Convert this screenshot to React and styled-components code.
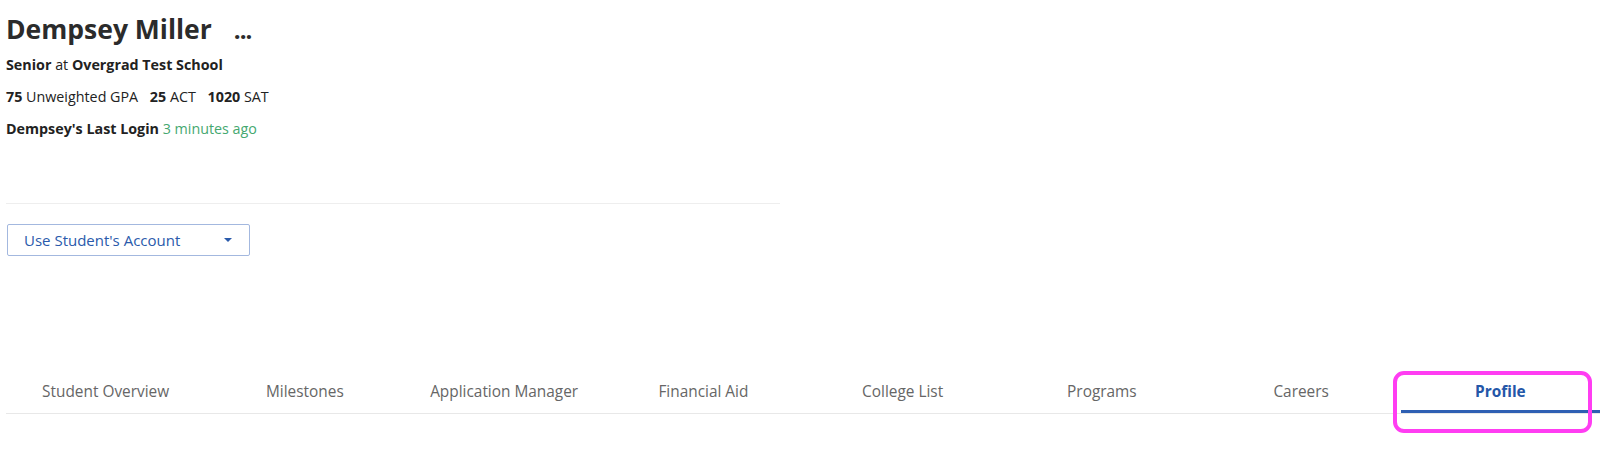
import React from 'react';
import styled, { createGlobalStyle } from 'styled-components';

const GlobalStyle = createGlobalStyle`
  html, body {
    margin: 0;
    padding: 0;
    background: #fff;
  }
  body {
    font-family: "Open Sans", "Noto Sans", sans-serif;
    color: #222;
  }
`;

const Page = styled.div`
  width: 1600px;
  height: 470px;
  padding: 11px 0 0 6px;
  box-sizing: border-box;
  overflow: hidden;
`;

const Header = styled.div`
  width: 774px;
`;

const NameRow = styled.h1`
  display: flex;
  align-items: baseline;
  margin: 0 0 1px;
  font-size: 26.5px;
  line-height: 36px;
  font-weight: 700;
  color: #2b2b2b;
`;

const MoreButton = styled.span`
  margin-left: 22px;
  font-size: 24px;
  letter-spacing: -1px;
  color: #2b2b2b;
  cursor: pointer;
`;

const InfoLine = styled.div`
  font-size: 14.3px;
  line-height: 32px;
  color: #222;
  white-space: nowrap;
`;

const Strong = styled.strong`
  font-weight: 700;
  margin-left: ${(p) => (p.$gap ? '8px' : '0')};
`;

const Recent = styled.span`
  color: #45a870;
`;

const Divider = styled.hr`
  margin: 58px 0 0;
  border: 0;
  border-top: 1px solid #eeeeee;
  width: 774px;
`;

const AccountButton = styled.button`
  display: flex;
  align-items: center;
  justify-content: space-between;
  box-sizing: border-box;
  width: 243px;
  height: 32px;
  margin: 20px 0 0 1px;
  padding: 0 17px 0 16px;
  background: #fff;
  border: 1px solid #a3b8df;
  border-radius: 2px;
  font-family: "Open Sans", sans-serif;
  font-size: 15px;
  color: #2a5aab;
  cursor: pointer;
`;

const Caret = styled.span`
  width: 0;
  height: 0;
  border-left: 4px solid transparent;
  border-right: 4px solid transparent;
  border-top: 4px solid #2a5aab;
`;

const TabBar = styled.nav`
  display: flex;
  margin-top: 117px;
  border-bottom: 1px solid #e8e8e8;
`;

const Tab = styled.div`
  position: relative;
  flex: 1 1 0;
  height: 40px;
  padding-top: 9px;
  box-sizing: border-box;
  text-align: center;
  font-size: 15.4px;
  line-height: 20px;
  white-space: nowrap;
  color: ${(p) => (p.$active ? '#2456a8' : '#666')};
  font-weight: ${(p) => (p.$active ? 700 : 400)};
  box-shadow: ${(p) => (p.$active ? 'inset 0 -3px 0 #2e5fb3' : 'none')};
  cursor: pointer;
`;

const Highlight = styled.span`
  position: absolute;
  left: -8px;
  right: 8px;
  top: -2px;
  bottom: -20px;
  border: 4px solid #ff3df2;
  border-radius: 11px;
  pointer-events: none;
`;

const tabs = [
  'Student Overview',
  'Milestones',
  'Application Manager',
  'Financial Aid',
  'College List',
  'Programs',
  'Careers',
  'Profile',
];

export default function App() {
  const active = 'Profile';
  return (
    <>
      <GlobalStyle />
      <Page>
        <Header>
          <NameRow>
            Dempsey Miller
            <MoreButton>...</MoreButton>
          </NameRow>
          <InfoLine>
            <Strong>Senior</Strong> at <Strong>Overgrad Test School</Strong>
          </InfoLine>
          <InfoLine>
            <Strong>75</Strong> Unweighted GPA <Strong $gap>25</Strong> ACT{' '}
            <Strong $gap>1020</Strong> SAT
          </InfoLine>
          <InfoLine>
            <Strong>Dempsey's Last Login</Strong> <Recent>3 minutes ago</Recent>
          </InfoLine>
          <Divider />
          <AccountButton type="button">
            <span>Use Student's Account</span>
            <Caret />
          </AccountButton>
        </Header>
        <TabBar>
          {tabs.map((t) => (
            <Tab key={t} $active={t === active}>
              {t}
              {t === active && <Highlight />}
            </Tab>
          ))}
        </TabBar>
      </Page>
    </>
  );
}
